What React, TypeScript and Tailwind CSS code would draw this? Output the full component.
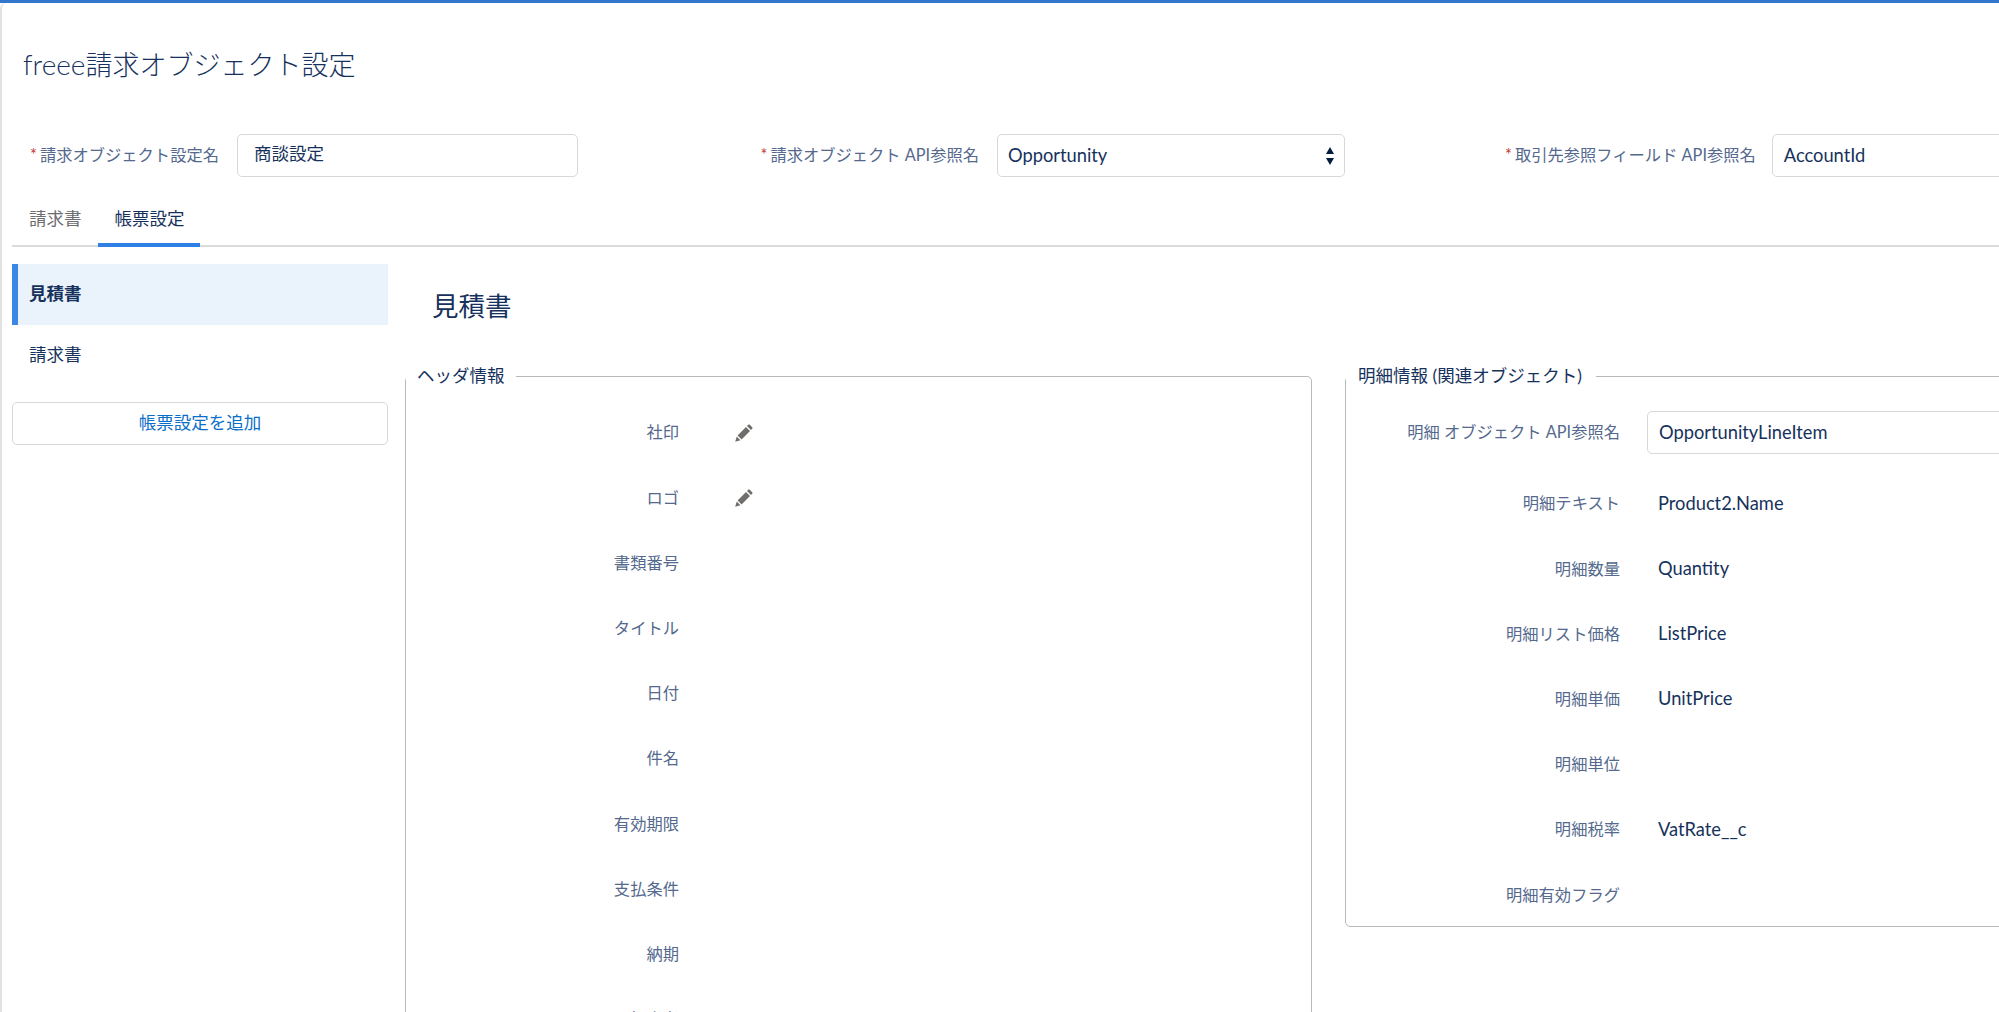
const sans = "font-['Lato','Noto_Sans_CJK_JP',sans-serif]";

const headerRows = ["社印", "ロゴ", "書類番号", "タイトル", "日付", "件名", "有効期限", "支払条件", "納期", "担当者"];

const lineRows = [
  { label: "明細テキスト", value: "Product2.Name" },
  { label: "明細数量", value: "Quantity" },
  { label: "明細リスト価格", value: "ListPrice" },
  { label: "明細単価", value: "UnitPrice" },
  { label: "明細単位", value: "" },
  { label: "明細税率", value: "VatRate__c" },
  { label: "明細有効フラグ", value: "" },
];

const Pencil = () => (
  <svg viewBox="0 0 18 18" className="h-[18px] w-[18px] fill-[#706e6b]">
    <path d="M2.6 11.4 11 3l4 4-8.4 8.4z" />
    <path d="M1.8 12.6l3.6 3.6L.2 17.8z" />
    <path d="M12 2l1.2-1.2c.5-.5 1.1-.5 1.6 0l2.4 2.4c.5.5.5 1.1 0 1.6L16 6z" />
  </svg>
);

const Updown = () => (
  <svg viewBox="0 0 8 18" className="h-[18px] w-[8px] fill-[#061c3f]">
    <path d="M4 0l4 7H0z" />
    <path d="M0 11h8l-4 7z" />
  </svg>
);

const Required = ({ label }: { label: string }) => (
  <span className="flex items-center text-[16.3px] text-[#54698d]">
    <span className="mr-[3px] text-[#c23934]">*</span>
    {label}
  </span>
);

const Box = ({ className, children }: { className: string; children: React.ReactNode }) => (
  <div className={`flex h-[43px] shrink-0 items-center rounded-[5px] border border-[#d8d8d8] bg-white text-[#16325c] ${className}`}>
    {children}
  </div>
);

export default function App() {
  return (
    <div className={`h-[1012px] w-[1999px] overflow-hidden bg-white ${sans}`}>
      <div className="h-[3px] bg-[#3277cb]" />
      <div className="h-[1009px] overflow-hidden rounded-tl-md border-l-2 border-[#e2e2e2]">
        <h1 className="pt-[44px] pl-[21px] text-[27px] leading-[34px] font-light text-[#16325c]">
          <span className="text-[28px]">freee</span>請求オブジェクト設定
        </h1>

        {/* settings form */}
        <div className="mt-[52px] flex h-[43px] w-[2400px] items-center">
          <div className="flex w-[576px] items-center justify-end gap-[18px]">
            <Required label="請求オブジェクト設定名" />
            <Box className="w-[341px] pb-[2px] pl-[16px] text-[17.5px]">商談設定</Box>
          </div>
          <div className="flex w-[767px] items-center justify-end gap-[18px]">
            <Required label="請求オブジェクト API参照名" />
            <Box className="w-[348px] justify-between px-[10px] text-[18.3px]">
              Opportunity
              <Updown />
            </Box>
          </div>
          <div className="flex w-[1000px] items-center justify-start gap-[16px] pl-[160px]">
            <Required label="取引先参照フィールド API参照名" />
            <Box className="w-[500px] pl-[11px] text-[18.3px]">AccountId</Box>
          </div>
        </div>

        {/* tabs */}
        <div className="mt-[18px] ml-[10px] flex h-[52px] border-b-[2px] border-[#dddbda] text-[17.5px]">
          <div className="flex h-[52px] items-center pr-[16px] pb-[4px] pl-[17px] text-[#6b6d70]">請求書</div>
          <div className="flex h-[52px] items-center border-b-[4px] border-[#2f80e4] pr-[15px] pl-[17px] text-[#16325c]">帳票設定</div>
        </div>

        <div className="flex">
          {/* sidebar */}
          <div className="mt-[17px] ml-[10px] w-[376px] shrink-0 text-[17.5px]">
            <div className="flex h-[61px] items-center border-l-[6px] border-[#3b87e4] bg-[#eaf2fb] pl-[11px] font-bold text-[#16325c]">見積書</div>
            <div className="flex h-[61px] items-center pl-[17px] text-[#16325c]">請求書</div>
            <div className="mt-[16px] flex h-[43px] items-center justify-center rounded-[5px] border border-[#d8d8d8] text-[#0b6fc9]">帳票設定を追加</div>
          </div>

          <div className="ml-[17px] flex-1">
            <h2 className="mt-[41px] ml-[27px] text-[26.5px] leading-[36px] text-[#16325c]">見積書</h2>

            <div className="mt-[40px] flex items-start">
              {/* header fieldset */}
              <fieldset className="h-[800px] w-[907px] shrink-0 rounded-[5px] border-[1.5px] border-[#b9b9b9]">
                <legend className="px-[11px] text-[17.5px] leading-[24px] text-[#16325c]">ヘッダ情報</legend>
                <div className="pt-[12px]">
                  {headerRows.map((label, i) => (
                    <div key={label} className="flex h-[65.2px] items-center">
                      <div className="w-[273px] text-right text-[16.3px] text-[#54698d]">{label}</div>
                      {i < 2 && (
                        <div className="ml-[56px]">
                          <Pencil />
                        </div>
                      )}
                    </div>
                  ))}
                </div>
              </fieldset>

              {/* line item fieldset */}
              <fieldset className="ml-[33px] h-[563px] w-[900px] shrink-0 rounded-[5px] border-[1.5px] border-[#b9b9b9]">
                <legend className="pr-[14px] pl-[12px] text-[17.5px] leading-[24px] text-[#16325c]">明細情報 (関連オブジェクト)</legend>
                <div className="flex items-center pt-[23px]">
                  <div className="w-[274px] text-right text-[16.3px] text-[#54698d]">明細 オブジェクト API参照名</div>
                  <Box className="ml-[27px] w-[500px] pl-[11px] text-[18.3px]">OpportunityLineItem</Box>
                </div>
                <div className="pt-[17px]">
                  {lineRows.map((row) => (
                    <div key={row.label} className="flex h-[65.2px] items-center">
                      <div className="w-[274px] text-right text-[16.3px] text-[#54698d]">{row.label}</div>
                      <div className="ml-[38px] text-[18.3px] text-[#16325c]">{row.value}</div>
                    </div>
                  ))}
                </div>
              </fieldset>
            </div>
          </div>
        </div>
      </div>
    </div>
  );
}
